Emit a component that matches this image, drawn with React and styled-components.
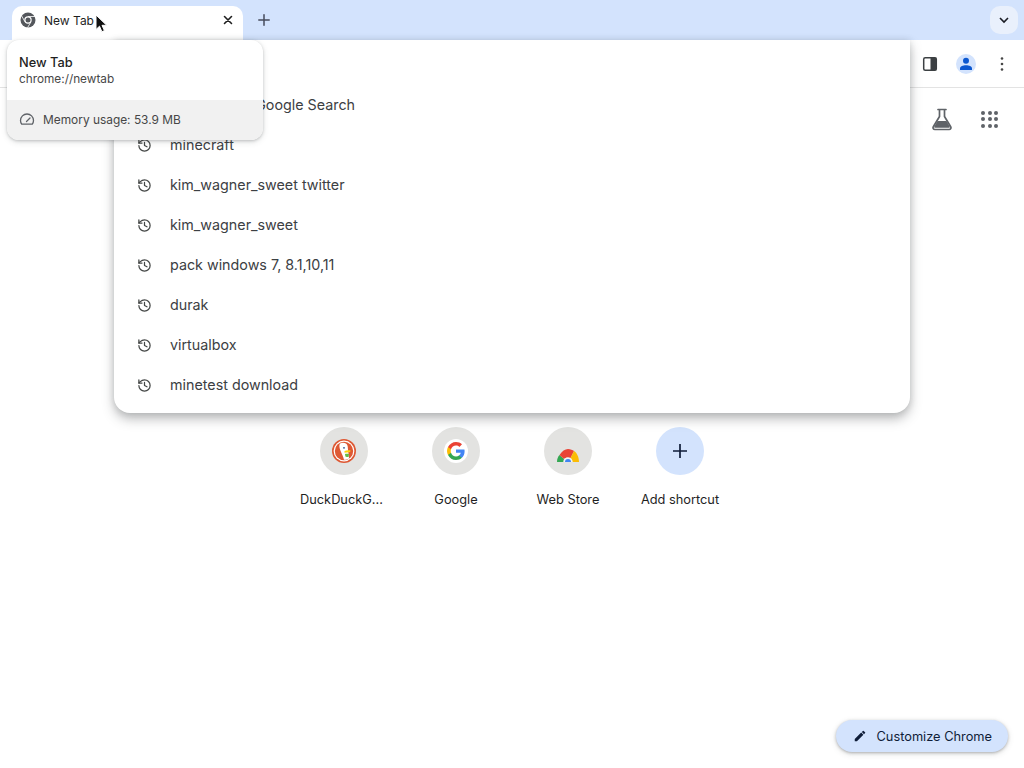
import React from 'react'
import styled, { createGlobalStyle } from 'styled-components'
import { History } from 'lucide-react'

const GlobalStyle = createGlobalStyle`
  html, body { margin: 0; padding: 0; background: #fff; }
  body { font-family: Inter, "Liberation Sans", sans-serif; color: #1f1f1f; }
  * { box-sizing: border-box; }
`

const history = ['minecraft', 'kim_wagner_sweet twitter', 'kim_wagner_sweet', 'pack windows 7, 8.1,10,11', 'durak', 'virtualbox', 'minetest download']

function ChromeIcon() {
  return (
    <svg width="16" height="16" viewBox="0 0 16 16">
      <circle cx="8" cy="8" r="7.5" fill="#54575c" />
      <circle cx="8" cy="8" r="3.7" fill="#fff" />
      <circle cx="8" cy="8" r="2.5" fill="#54575c" />
      <path d="M8 4.500h7M5 9.800L1.500 3.700M11 9.800L7.500 15.700" stroke="#fff" strokeWidth="0.8" fill="none" />
    </svg>
  )
}

function DuckIcon() {
  return (
    <svg width="24" height="24" viewBox="0 0 24 24">
      <circle cx="12" cy="12" r="12" fill="#de5833" />
      <circle cx="12" cy="12" r="10.4" fill="#fff" />
      <circle cx="12" cy="12" r="9.2" fill="#de5833" />
      <path d="M8 4.500c3-1.600 7-.6 7.600 2.500.4 2 .3 3.500.5 5 .3 2.500 1 4.500.9 7.500-1.600 1-3.400 1.300-5 1.200-.6-3-2.300-6-3.500-9C7.500 9 6.800 6.500 8 4.500z" fill="#fff" />
      <circle cx="12" cy="8.800" r="0.9" fill="#2d4f8e" />
      <path d="M12.500 12c1.800-.9 4-1 6-.6.4.8-.4 1.500-1.400 1.800-1.400.4-3.200.4-4.600.5z" fill="#fdd20a" />
      <path d="M13 15c1.200-.4 2.800-.3 4 .1l-.4 3c-1.200 0-2.500-.2-3.200-.6z" fill="#65bc46" />
    </svg>
  )
}

function GoogleIcon() {
  return (
    <svg width="24" height="24" viewBox="0 0 24 24">
      <circle cx="12" cy="12" r="12" fill="#fff" />
      <path d="M20.600 12.200c0-.6 0-1.200-.2-1.800H12v3.400h4.800c-.2 1.100-.8 2-1.800 2.700v2.200h2.900c1.700-1.600 2.700-3.800 2.700-6.500z" fill="#4285f4" />
      <path d="M12 21c2.400 0 4.400-.8 5.900-2.200L15 16.500c-.8.500-1.800.9-3 .9-2.300 0-4.300-1.600-5-3.700H4v2.300C5.500 19 8.500 21 12 21z" fill="#34a853" />
      <path d="M7 13.700c-.4-1.100-.4-2.300 0-3.400V8H4c-1.300 2.500-1.300 5.500 0 8z" fill="#fbbc05" />
      <path d="M12 6.600c1.300 0 2.500.5 3.400 1.300l2.600-2.600C16.400 3.900 14.400 3 12 3 8.500 3 5.500 5 4 8l3 2.300c.7-2.100 2.700-3.700 5-3.700z" fill="#ea4335" />
    </svg>
  )
}

function StoreIcon() {
  return (
    <svg width="24" height="24" viewBox="0 0 24 24">
      <path d="M1 23c0-3 1-5.500 2.500-7L8 20c-.5 1-.5 2-.5 3z" fill="#34a853" />
      <path d="M3.500 16C6 12 9 10 12 10c2.500 0 4.500 1 6 2l-3.500 7c-.8-.3-1.700-.5-2.500-.5-1.800 0-3.200.5-4 1.500z" fill="#ea4335" />
      <path d="M18 12c3 2 5 6 5 11h-6.500c0-2-1-3.500-2-4z" fill="#fbbc05" />
      <path d="M7.500 23a4.500 4.500 0 0 1 9 0z" fill="#f4f4f4" />
      <path d="M9 23a3 3 0 0 1 6 0z" fill="#4285f4" />
    </svg>
  )
}

const shortcuts = [
  { label: 'DuckDuckG...', icon: <DuckIcon />, truncated: true },
  { label: 'Google', icon: <GoogleIcon /> },
  { label: 'Web Store', icon: <StoreIcon /> },
]

const App = () => (
  <Page>
    <GlobalStyle />
    <TabStrip>
      <Tab>
        <ChromeIcon />
        <TabTitle>New Tab</TabTitle>
        <TabClose>
          <svg width="10" height="10" viewBox="0 0 10 10" stroke="#1f1f1f" strokeWidth="1.6" strokeLinecap="round"><path d="M1.500 1.500l7 7M8.500 1.500l-7 7" /></svg>
        </TabClose>
      </Tab>
      <NewTab>
        <svg width="12" height="12" viewBox="0 0 12 12" stroke="#474c5c" strokeWidth="1.5" strokeLinecap="round"><path d="M6 .8v10.400M.8 6h10.400" /></svg>
      </NewTab>
      <TabSearch>
        <svg width="10" height="7" viewBox="0 0 10 7" fill="none" stroke="#1a1c24" strokeWidth="1.6"><path d="M1 1l4 4 4-4" /></svg>
      </TabSearch>
    </TabStrip>

    <Toolbar>
      <ToolIcon>
        <svg width="16" height="16" viewBox="0 0 16 16">
          <rect x="1.7" y="1.7" width="12.6" height="12.6" rx="1.5" fill="#fff" stroke="#3c4043" strokeWidth="1.5" />
          <rect x="8.5" y="1.7" width="5.8" height="12.6" fill="#3c4043" />
        </svg>
      </ToolIcon>
      <Avatar>
        <svg width="16" height="16" viewBox="0 0 16 16" fill="#0b57d0">
          <circle cx="8" cy="4.800" r="3" />
          <path d="M2 14v-1.500C2 10.500 5 9.300 8 9.300s6 1.200 6 3.200V14z" />
        </svg>
      </Avatar>
      <ToolIcon>
        <svg width="16" height="16" viewBox="0 0 16 16" fill="#474747">
          <circle cx="8" cy="2.500" r="1.3" />
          <circle cx="8" cy="8" r="1.3" />
          <circle cx="8" cy="13.500" r="1.3" />
        </svg>
      </ToolIcon>
    </Toolbar>

    <NewTabPage>
      <TopActions>
        <svg width="24" height="24" viewBox="0 0 24 24">
          <path d="M8 2.500h8M9.500 3v6.500L3.300 19.700c-.8 1.300.1 2.800 1.600 2.800h14.200c1.500 0 2.400-1.500 1.600-2.800L14.500 9.500V3" fill="none" stroke="#5f6368" strokeWidth="1.700" strokeLinejoin="round" strokeLinecap="round" />
          <path d="M7.500 14h9l3.200 5.500c.3.600-.1 1.300-.8 1.300H5.100c-.7 0-1.100-.7-.8-1.300z" fill="#5f6368" />
        </svg>
        <AppsGrid>
          {Array.from({ length: 9 }).map((_, i) => <AppDot key={i} />)}
        </AppsGrid>
      </TopActions>

      <Shortcuts>
        {shortcuts.map(s => (
          <Shortcut key={s.label}>
            <ShortcutCircle>{s.icon}</ShortcutCircle>
            <ShortcutLabel $truncated={s.truncated}>{s.label}</ShortcutLabel>
          </Shortcut>
        ))}
        <Shortcut>
          <ShortcutCircle $add>
            <svg width="14" height="14" viewBox="0 0 14 14" stroke="#0f1d38" strokeWidth="1.7"><path d="M7 0v14M0 7h14" /></svg>
          </ShortcutCircle>
          <ShortcutLabel>Add shortcut</ShortcutLabel>
        </Shortcut>
      </Shortcuts>

      <CustomizeButton>
        <svg width="14" height="14" viewBox="0 0 24 24" fill="#0f1d38">
          <path d="M3 17.250V21h3.750L17.810 9.940l-3.750-3.750L3 17.250zM20.710 7.040a1 1 0 0 0 0-1.410l-2.340-2.340a1 1 0 0 0-1.410 0l-1.830 1.830 3.750 3.750 1.830-1.830z" />
        </svg>
        Customize Chrome
      </CustomizeButton>
    </NewTabPage>

    <Omnibox>
      <OmniInput />
      <OmniRow>
        <History size={15} color="#444746" strokeWidth={2} />
        <OmniText>minetest 5 - Google Search</OmniText>
      </OmniRow>
      {history.map(h => (
        <OmniRow key={h}>
          <History size={15} color="#444746" strokeWidth={2} />
          <OmniText>{h}</OmniText>
        </OmniRow>
      ))}
    </Omnibox>

    <HoverCard>
      <CardHead>
        <CardTitle>New Tab</CardTitle>
        <CardUrl>chrome://newtab</CardUrl>
      </CardHead>
      <CardMemory>
        <svg width="16" height="16" viewBox="0 0 16 16" fill="none" stroke="#5f6368" strokeWidth="1.3" strokeLinecap="round">
          <path d="M2.800 13.200h10.400c.9-1 1.300-2.300 1.300-3.700A6.500 6.500 0 0 0 8 3a6.500 6.500 0 0 0-6.500 6.500c0 1.400.4 2.700 1.300 3.700z" />
          <path d="M7.500 10.500l3.500-3.500" />
        </svg>
        Memory usage: 53.9 MB
      </CardMemory>
    </HoverCard>

    <Cursor width="13" height="19" viewBox="0 0 13 19">
      <path d="M1 1v14.500l3.500-3.300 2.400 5.500 2.500-1.100-2.400-5.300h4.700z" fill="#111" stroke="#fff" strokeWidth="1" />
    </Cursor>
  </Page>
)

export default App

const Page = styled.div`
  position: relative;
  width: 1024px;
  height: 768px;
  overflow: hidden;
  display: flex;
  flex-direction: column;
  background: #fff;
`

const TabStrip = styled.div`
  height: 40px;
  flex: none;
  background: #d3e3fd;
  display: flex;
  align-items: flex-end;
  padding-left: 12px;
  padding-right: 6px;
`

const Tab = styled.div`
  width: 231px;
  height: 34px;
  background: #fff;
  border-radius: 10px 10px 0 0;
  display: flex;
  align-items: center;
  padding: 0 10px 6px 8px;
  gap: 8px;
`

const TabTitle = styled.span`
  flex: 1;
  font-size: 12px;
  color: #1f1f1f;
`

const TabClose = styled.span`
  display: flex;
`

const NewTab = styled.span`
  display: flex;
  margin-left: 15px;
  height: 34px;
  padding-bottom: 6px;
  align-items: center;
`

const TabSearch = styled.span`
  margin-left: auto;
  margin-bottom: 6px;
  width: 28px;
  height: 28px;
  border-radius: 10px;
  background: #e9f0fc;
  display: flex;
  align-items: center;
  justify-content: center;
`

const Toolbar = styled.div`
  height: 48px;
  flex: none;
  background: #fff;
  border-bottom: 1px solid #e3e3e3;
  border-radius: 10px 10px 0 0;
  display: flex;
  align-items: center;
  justify-content: flex-end;
  gap: 8px;
  padding-right: 8px;
`

const ToolIcon = styled.span`
  width: 28px;
  height: 28px;
  display: flex;
  align-items: center;
  justify-content: center;
`

const Avatar = styled(ToolIcon)`
  border-radius: 50%;
  width: 20px;
  height: 20px;
  margin: 0 4px;
  background: #d3e3fd;
`

const NewTabPage = styled.main`
  flex: 1;
  display: flex;
  flex-direction: column;
  padding: 0 16px 16px;
`

const TopActions = styled.div`
  display: flex;
  justify-content: flex-end;
  align-items: center;
  gap: 27px;
  padding: 19px 10px 0 0;
`

const AppsGrid = styled.div`
  display: grid;
  grid-template-columns: repeat(3, 4px);
  grid-template-rows: repeat(3, 4px);
  gap: 2.5px;
`

const AppDot = styled.span`
  border-radius: 50%;
  background: #5f6368;
`

const Shortcuts = styled.div`
  display: flex;
  justify-content: center;
  padding-top: 296px;
`

const Shortcut = styled.div`
  width: 112px;
  display: flex;
  flex-direction: column;
  align-items: center;
  gap: 17px;
`

const ShortcutCircle = styled.div`
  width: 48px;
  height: 48px;
  border-radius: 50%;
  background: ${props => (props.$add ? '#d3e3fd' : '#e3e3e1')};
  display: flex;
  align-items: center;
  justify-content: center;
`

const ShortcutLabel = styled.div`
  width: 88px;
  text-align: ${props => (props.$truncated ? 'left' : 'center')};
  white-space: nowrap;
  font-size: 12.8px;
  line-height: 16px;
  color: #1f1f1f;
`

const CustomizeButton = styled.button`
  margin-top: auto;
  align-self: flex-end;
  height: 32px;
  padding: 0 16px 0 17px;
  border: 0;
  border-radius: 16px;
  background: #d3e3fd;
  box-shadow: 0 1px 3px rgba(60, 64, 67, 0.35), 0 2px 6px rgba(60, 64, 67, 0.15);
  display: flex;
  align-items: center;
  gap: 9px;
  font-family: inherit;
  font-size: 12.8px;
  color: #0f1d38;
`

const Omnibox = styled.div`
  position: absolute;
  left: 114px;
  top: 40px;
  width: 796px;
  height: 373px;
  background: #fff;
  border-radius: 0 0 16px 16px;
  box-shadow: 0 6px 12px rgba(60, 64, 67, 0.35), 0 0 6px rgba(60, 64, 67, 0.15);
`

const OmniInput = styled.div`
  height: 45px;
`

const OmniRow = styled.div`
  height: 40px;
  display: flex;
  align-items: center;
  gap: 18px;
  padding-left: 23px;
`

const OmniText = styled.span`
  font-size: 14.3px;
  padding-bottom: 2px;
  color: #3c4043;
`

const HoverCard = styled.div`
  position: absolute;
  left: 7px;
  top: 40px;
  width: 256px;
  height: 100px;
  border-radius: 12px;
  background: #fff;
  overflow: hidden;
  display: flex;
  flex-direction: column;
  box-shadow: 0 1px 3px rgba(60, 64, 67, 0.25), 0 2px 6px rgba(60, 64, 67, 0.15);
`

const CardHead = styled.div`
  height: 60px;
  padding: 15px 12px 0;
`

const CardTitle = styled.div`
  font-size: 12.8px;
  font-weight: 500;
  line-height: 16px;
  color: #1f1f1f;
`

const CardUrl = styled.div`
  font-size: 11.8px;
  line-height: 16px;
  color: #474747;
`

const CardMemory = styled.div`
  flex: 1;
  background: #f1f1f1;
  display: flex;
  align-items: center;
  gap: 8px;
  padding: 0 0 2px 12px;
  font-size: 11.9px;
  color: #474747;
`

const Cursor = styled.svg`
  position: absolute;
  left: 95px;
  top: 14px;
`
